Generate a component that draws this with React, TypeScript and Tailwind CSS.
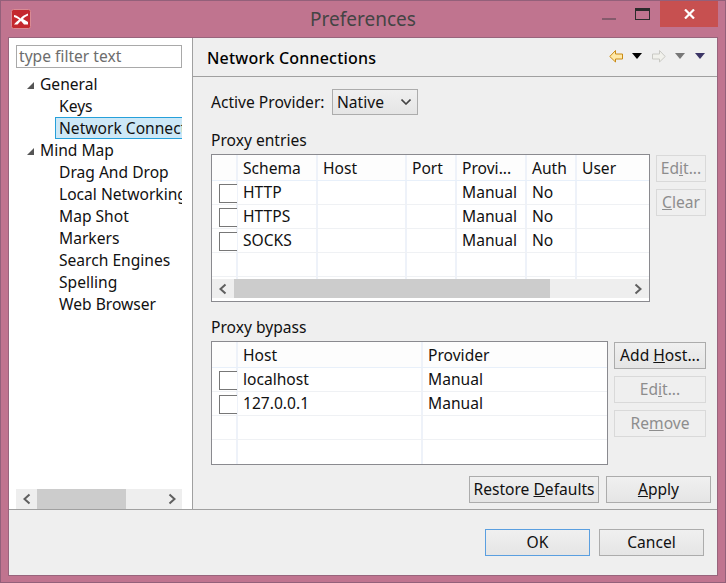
import type { ReactNode } from 'react'

const treeItems = [
    { label: 'General', parent: true },
    { label: 'Keys' },
    { label: 'Network Connections', selected: true },
    { label: 'Mind Map', parent: true },
    { label: 'Drag And Drop' },
    { label: 'Local Networking' },
    { label: 'Map Shot' },
    { label: 'Markers' },
    { label: 'Search Engines' },
    { label: 'Spelling' },
    { label: 'Web Browser' },
]

const entryRows = [
    ['HTTP', '', '', 'Manual', 'No', ''],
    ['HTTPS', '', '', 'Manual', 'No', ''],
    ['SOCKS', '', '', 'Manual', 'No', ''],
    null,
    null,
]

const bypassRows = [['localhost', 'Manual'], ['127.0.0.1', 'Manual'], null, null]

function Chevron({ dir }: { dir: 'left' | 'right' }) {
    return (
        <svg width="10" height="12" viewBox="0 0 10 12" fill="none" stroke="#5f5f5f" strokeWidth="2">
            <path d={dir === 'left' ? 'M7.5 1.5 L2.5 6 L7.5 10.5' : 'M2.5 1.5 L7.5 6 L2.5 10.5'} />
        </svg>
    )
}

function Button({ children, disabled, focused, className }: { children: ReactNode; disabled?: boolean; focused?: boolean; className: string }) {
    const tone = disabled
        ? 'bg-[#efefef] border-[#d9d9d9] text-[#8d8d8d]'
        : focused
            ? 'bg-gradient-to-b from-[#f0f0f0] to-[#e5e5e5] border-[#5a9fe0] text-[#111]'
            : 'bg-gradient-to-b from-[#f0f0f0] to-[#e5e5e5] border-[#acacac] text-[#111]'
    return (
        <div className={`h-[27px] shrink-0 border flex items-center justify-center whitespace-pre ${tone} ${className}`}>
            {children}
        </div>
    )
}

function Checkbox() {
    return <div className="w-[18px] h-[19px] border border-r-0 border-[#777] bg-white" />
}

function Cell({ children }: { children?: ReactNode }) {
    return <div className="border-r-2 border-[#eef2f9] pl-[5px] h-full leading-[23px] overflow-hidden whitespace-nowrap last:border-r-0">{children}</div>
}

function HeadCell({ children }: { children?: ReactNode }) {
    return <div className="border-r-2 border-[#eef2f9] pl-[5px] h-full leading-[27px] overflow-hidden whitespace-nowrap last:border-r-0">{children}</div>
}

export default function App() {
    return (
        <div className="w-[726px] h-[583px] bg-[#c0748f] border border-[#93607a] text-[15.6px] text-[#111] overflow-hidden flex flex-col" style={{ fontFamily: '"Noto Sans", sans-serif' }}>
            {/* Title bar */}
            <div className="h-[36px] shrink-0 flex items-start relative">
                <div className="ml-[10px] mt-[8px]">
                    <svg width="20" height="20" viewBox="0 0 20 20">
                        <rect x="0.5" y="0.5" width="19" height="19" rx="2" fill="#c4282e" stroke="#d98a94" />
                        <path d="M3 6 C6 6.5 8 8 9.5 9.5 C11 7.5 13 6 17 4.5 L17 6.5 C15 7.5 13 8.5 12 10 L17 13 L17 15.5 L13 15.5 L10 12 C8.5 13 7.5 14.5 6.5 15.5 L3 15.5 C4.5 13.5 6.5 12 8 10.5 C6.5 9.5 4.5 8.5 3 8 Z" fill="#fff" />
                    </svg>
                </div>
                <div className="absolute left-0 right-0 top-[6px] text-center text-[19px] leading-[25px] text-[#444]">Preferences</div>
                <div className="ml-auto flex items-start">
                    <div className="w-[14px] h-[2px] bg-[#855a6c] mt-[17px]" />
                    <div className="w-[15px] h-[12px] border border-[#2b2b2b] border-t-[3px] mt-[7px] ml-[19px]" />
                    <div className="w-[58px] h-[26px] bg-[#c75050] ml-[10px] mr-[7px] flex items-center justify-center">
                        <svg width="11" height="10" viewBox="0 0 11 10" stroke="#fff" strokeWidth="2.2">
                            <path d="M1 0.5 L10 9.5 M10 0.5 L1 9.5" />
                        </svg>
                    </div>
                </div>
            </div>

            {/* Dialog body */}
            <div className="ml-[7px] w-[710px] h-[539px] border border-[#98647c] bg-[#efefef] flex flex-col">
                <div className="h-[471px] flex shrink-0">
                    {/* Left tree */}
                    <div className="w-[184px] shrink-0 bg-white border-r border-[#a0a0a0] pl-[7px] pt-[7px] flex flex-col">
                        <div className="w-[166px] h-[23px] border border-[#a9a9a9] pl-[2px] leading-[21px] text-[#6d6d6d]">type filter text</div>
                        <div className="w-[166px] mt-[5px] overflow-hidden">
                            {treeItems.map(item => (
                                <div key={item.label} className={`h-[22px] flex items-center whitespace-nowrap ${item.selected ? '' : 'pt-[2px]'}`}>
                                    {item.parent ? (
                                        <>
                                            <svg width="7" height="7" viewBox="0 0 7 7" className="ml-[11px]">
                                                <path d="M7 0 L7 7 L0 7 Z" fill="#555" />
                                            </svg>
                                            <span className="ml-[6px]">{item.label}</span>
                                        </>
                                    ) : item.selected ? (
                                        <div className="ml-[39px] w-[127px] h-[22px] bg-[#cde8f7] border border-r-0 border-[#26a0da] pl-[3px] leading-[20px] overflow-hidden">{item.label}</div>
                                    ) : (
                                        <span className="ml-[43px]">{item.label}</span>
                                    )}
                                </div>
                            ))}
                        </div>
                        <div className="mt-auto w-[166px] h-[20px] bg-[#eeeeee] flex items-center">
                            <div className="w-[21px] flex justify-center"><Chevron dir="left" /></div>
                            <div className="w-[89px] h-[20px] bg-[#cccccc]" />
                            <div className="ml-auto w-[21px] flex justify-center"><Chevron dir="right" /></div>
                        </div>
                    </div>

                    {/* Right page */}
                    <div className="flex-1 min-w-0 flex flex-col">
                        <div className="h-[39px] shrink-0 border-b border-[#a0a0a0] pl-[14px] pr-[12px] flex items-center">
                            <span className="font-medium text-[16px] text-black tracking-[0.2px] pt-[2px]">Network Connections</span>
                            <div className="ml-auto flex items-center pb-[2px]">
                                <svg width="14" height="13" viewBox="0 0 14 13">
                                    <path d="M6.5 0.5 L0.8 6.5 L6.5 12 L6.5 9 L13.5 9 L13.5 4 L6.5 4 Z" fill="#ffe9a8" stroke="#c98a14" />
                                </svg>
                                <svg width="10" height="6" viewBox="0 0 10 6" className="ml-[9px]"><path d="M0 0 H10 L5 6 Z" fill="#000" /></svg>
                                <svg width="14" height="13" viewBox="0 0 14 13" className="ml-[10px]">
                                    <path d="M7.5 0.5 L13.2 6.5 L7.5 12 L7.5 9 L0.5 9 L0.5 4 L7.5 4 Z" fill="#f1f1ec" stroke="#c9c9c4" />
                                </svg>
                                <svg width="10" height="6" viewBox="0 0 10 6" className="ml-[9px]"><path d="M0 0 H10 L5 6 Z" fill="#777" /></svg>
                                <svg width="10" height="6" viewBox="0 0 10 6" className="ml-[10px]"><path d="M0 0 H10 L5 6 Z" fill="#3b3566" /></svg>
                            </div>
                        </div>

                        <div className="flex-1 pl-[18px] pr-[6px] pt-[12px] flex flex-col">
                            <div className="flex items-center h-[26px]">
                                <span className="w-[121px] pt-[2px]">Active Provider:</span>
                                <div className="w-[86px] h-[26px] border border-[#acacac] bg-gradient-to-b from-[#f0f0f0] to-[#e5e5e5] pl-[4px] pr-[6px] flex items-center justify-between">
                                    <span className="pt-[2px]">Native</span>
                                    <svg width="10" height="6" viewBox="0 0 10 6" fill="none" stroke="#444" strokeWidth="1.6"><path d="M0.5 0.5 L5 5 L9.5 0.5" /></svg>
                                </div>
                            </div>

                            <div className="mt-[14px] mb-[3px] h-[22px] leading-[22px]">Proxy entries</div>
                            <div className="flex gap-[6px]">
                                <div className="w-[439px] h-[148px] border border-[#8a8a8f] bg-white flex flex-col">
                                    <div className="h-[124px] overflow-hidden shrink-0">
                                        <div className="h-[26px] grid grid-cols-[26px_80px_89px_50px_70px_50px_1fr] border-b border-[#e8f0fa] bg-[#fdfdfd]">
                                            <HeadCell />
                                            <HeadCell>Schema</HeadCell>
                                            <HeadCell>Host</HeadCell>
                                            <HeadCell>Port</HeadCell>
                                            <HeadCell>Provi...</HeadCell>
                                            <HeadCell>Auth</HeadCell>
                                            <HeadCell>User</HeadCell>
                                        </div>
                                        {entryRows.map((row, i) => (
                                            <div key={i} className="h-[24px] grid grid-cols-[26px_80px_89px_50px_70px_50px_1fr] border-b border-[#eff1f4]">
                                                <div className="border-r-2 border-[#eef2f9] pl-[7px] pt-[3px]">{row && <Checkbox />}</div>
                                                {(row ?? ['', '', '', '', '', '']).map((text, j) => <Cell key={j}>{text}</Cell>)}
                                            </div>
                                        ))}
                                    </div>
                                    <div className="h-[19px] bg-[#eeeeee] flex items-center">
                                        <div className="w-[22px] flex justify-center"><Chevron dir="left" /></div>
                                        <div className="w-[316px] h-[19px] bg-[#cccccc]" />
                                        <div className="ml-auto w-[22px] flex justify-center"><Chevron dir="right" /></div>
                                    </div>
                                </div>
                                <div className="pt-[1px] flex flex-col gap-[7px]">
                                    <Button disabled className="w-[50px]"><span>Ed<u>i</u>t...</span></Button>
                                    <Button disabled className="w-[50px]"><span><u>C</u>lear</span></Button>
                                </div>
                            </div>

                            <div className="mt-[14px] mb-[3px] h-[22px] leading-[22px]">Proxy bypass</div>
                            <div className="flex gap-[6px]">
                                <div className="w-[397px] h-[124px] border border-[#8a8a8f] bg-white overflow-hidden">
                                    <div className="h-[26px] grid grid-cols-[26px_185px_1fr] border-b border-[#e8f0fa] bg-[#fdfdfd]">
                                        <HeadCell />
                                        <HeadCell>Host</HeadCell>
                                        <HeadCell>Provider</HeadCell>
                                    </div>
                                    {bypassRows.map((row, i) => (
                                        <div key={i} className="h-[24px] grid grid-cols-[26px_185px_1fr] border-b border-[#eff1f4] last:border-b-0">
                                            <div className="border-r-2 border-[#eef2f9] pl-[7px] pt-[3px]">{row && <Checkbox />}</div>
                                            {(row ?? ['', '']).map((text, j) => <Cell key={j}>{text}</Cell>)}
                                        </div>
                                    ))}
                                </div>
                                <div className="pt-[1px] flex flex-col gap-[7px]">
                                    <Button className="w-[92px]"><span>Add <u>H</u>ost...</span></Button>
                                    <Button disabled className="w-[92px]"><span>Ed<u>i</u>t...</span></Button>
                                    <Button disabled className="w-[92px]"><span>Re<u>m</u>ove</span></Button>
                                </div>
                            </div>

                            <div className="mt-[11px] flex justify-end gap-[7px]">
                                <Button className="w-[130px]"><span>Restore <u>D</u>efaults</span></Button>
                                <Button className="w-[105px]"><span><u>A</u>pply</span></Button>
                            </div>
                        </div>
                    </div>
                </div>

                {/* Footer */}
                <div className="flex-1 border-t border-[#a0a0a0] pt-[19px] pr-[13px] flex justify-end gap-[9px]">
                    <Button focused className="w-[105px]">OK</Button>
                    <Button className="w-[105px]">Cancel</Button>
                </div>
            </div>
        </div>
    )
}
